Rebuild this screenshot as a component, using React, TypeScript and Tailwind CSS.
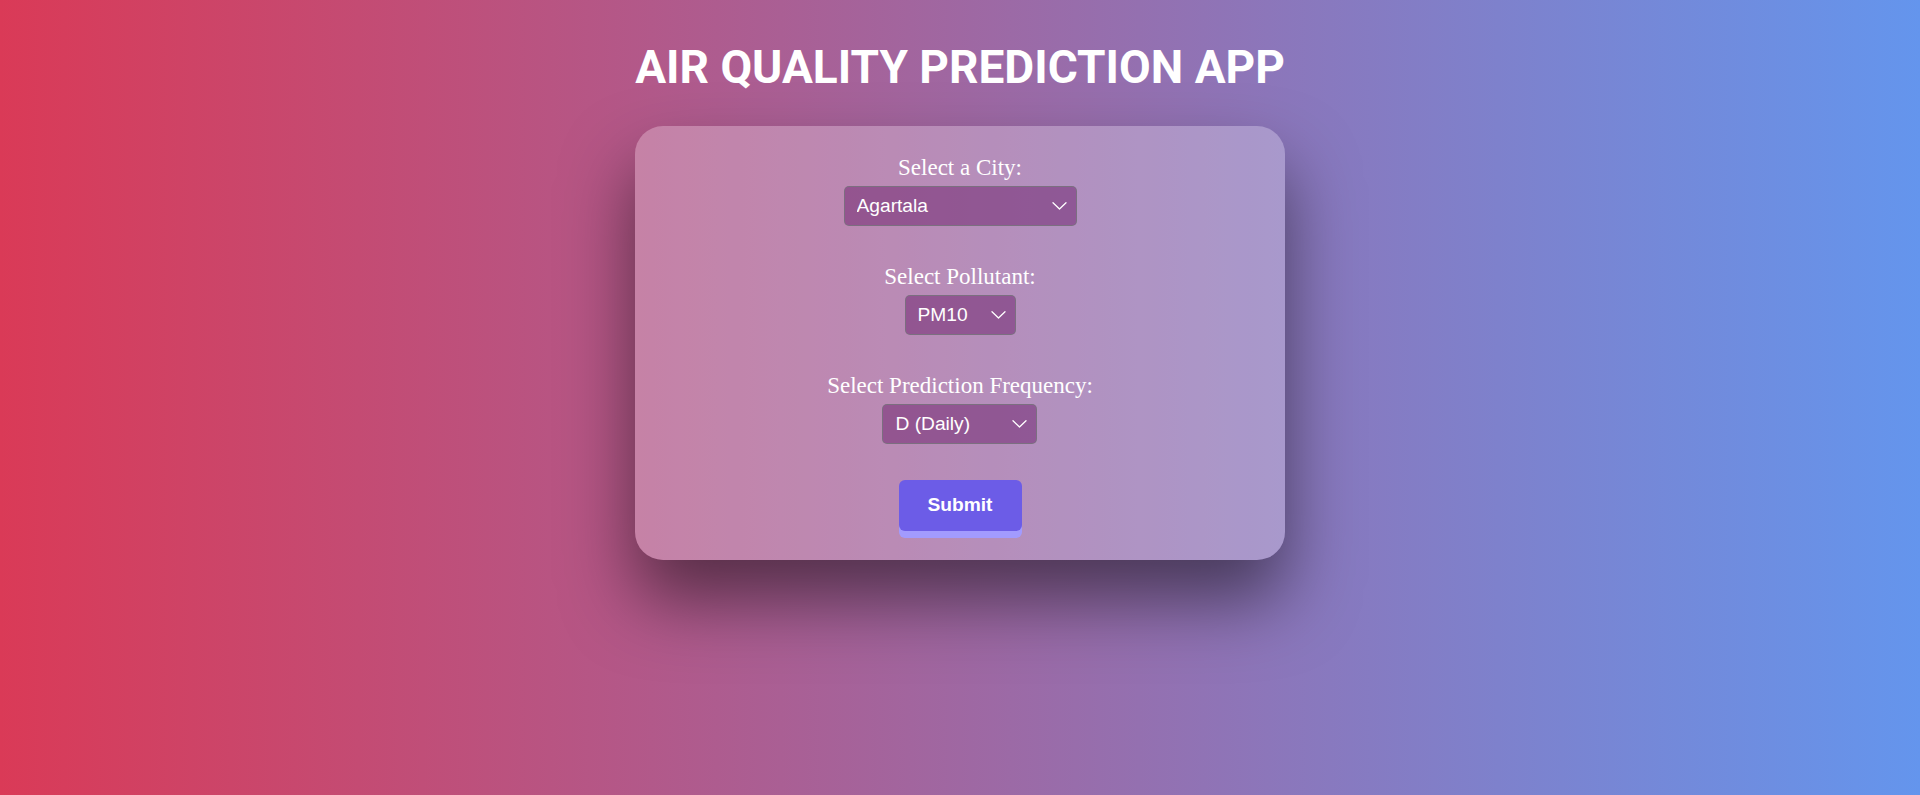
import { useState } from 'react'

const cities = ['Agartala', 'Ahmedabad', 'Aizawl', 'Amaravati', 'Amritsar', 'Bengaluru', 'Bhopal', 'Visakhapatnam']
const pollutants = ['PM10', 'PM2.5', 'NO2', 'SO2', 'CO', 'O3']
const frequencies = ['D (Daily)', 'W (Weekly)', 'M (Monthly)']

function Chevron() {
  return (
    <svg
      className="pointer-events-none absolute right-[10px] top-1/2 -translate-y-1/2"
      width="15"
      height="9"
      viewBox="0 0 15 9"
      fill="none"
    >
      <path d="M1 1.2l6.5 6.3 6.5-6.3" stroke="white" strokeWidth="1.3" strokeLinecap="round" strokeLinejoin="round" />
    </svg>
  )
}

function Field({
  label,
  options,
  value,
  onChange,
  width,
  first,
}: {
  label: string
  options: string[]
  value: string
  onChange: (v: string) => void
  width: string
  first?: boolean
}) {
  return (
    <div className={`flex flex-col items-center ${first ? '' : 'mt-[38px]'}`}>
      <label className="mb-[6px] text-[23px] leading-[25px] text-white font-['Liberation_Serif','Times_New_Roman',serif]">
        {label}
      </label>
      <div className={`relative ${width}`}>
        <select
          value={value}
          onChange={(e) => onChange(e.target.value)}
          className="h-[40px] w-full appearance-none rounded-[5px] border border-[rgba(120,115,125,0.85)] bg-[rgba(100,20,100,0.45)] pl-[12px] pr-[30px] text-[19.2px] text-white outline-none font-['Liberation_Sans',Arial,sans-serif]"
        >
          {options.map((o) => (
            <option key={o} value={o} className="bg-[#8f5a8f] text-white">
              {o}
            </option>
          ))}
        </select>
        <Chevron />
      </div>
    </div>
  )
}

export default function App() {
  const [city, setCity] = useState('Agartala')
  const [pollutant, setPollutant] = useState('PM10')
  const [freq, setFreq] = useState('D (Daily)')

  return (
    <div className="flex min-h-screen w-full flex-col items-center bg-[linear-gradient(to_right,#da3a57,#6495ed)] pt-[40px]">
      <h1 className="text-[46px] leading-[54px] font-bold text-white font-['Roboto',sans-serif]">AIR QUALITY PREDICTION APP</h1>

      {/* Form card */}
      <div className="mt-[32px] flex w-[650px] flex-col items-center rounded-[28px] bg-white/25 pt-[29px] pb-[29px] shadow-[0_40px_70px_rgba(0,0,0,0.5)]">
        <Field first label="Select a City:" options={cities} value={city} onChange={setCity} width="w-[233px]" />
        <Field label="Select Pollutant:" options={pollutants} value={pollutant} onChange={setPollutant} width="w-[111px]" />
        <Field label="Select Prediction Frequency:" options={frequencies} value={freq} onChange={setFreq} width="w-[155px]" />

        <button
          type="button"
          className="mt-[36px] h-[51px] w-[123px] rounded-[6px] bg-[#6c5ce7] text-[19.2px] font-bold text-white shadow-[0_7px_0_#a29bfe] font-['Liberation_Sans',Arial,sans-serif]"
        >
          Submit
        </button>
      </div>
    </div>
  )
}
